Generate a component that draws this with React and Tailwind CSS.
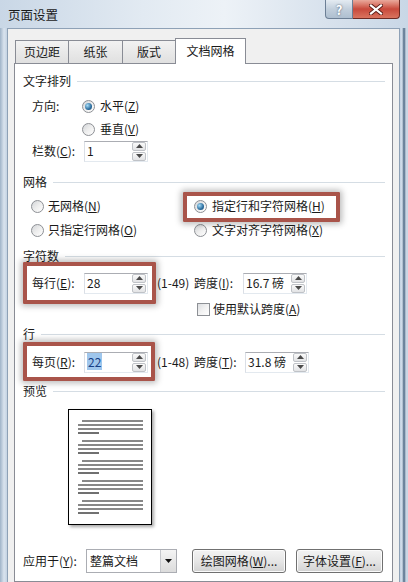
import React from 'react'

function Radio({ checked }) {
  return (
    <span className="w-[13px] h-[13px] shrink-0 rounded-full border border-[#8d9095] bg-gradient-to-br from-[#d3d5d8] via-[#eeeeee] to-white flex items-center justify-center">
      {checked && (
        <span className="w-[7px] h-[7px] rounded-full bg-[radial-gradient(circle_at_35%_35%,#a6dcf8,#2b6d9e_60%,#19466c)]" />
      )}
    </span>
  )
}

function Check() {
  return (
    <span className="w-[13px] h-[13px] shrink-0 border border-[#8d9095] bg-gradient-to-br from-[#dcdee1] via-[#f2f2f2] to-white" />
  )
}

function SpinBtn({ up }) {
  return (
    <div className="h-[9px] w-[14px] border border-[#bfc2c7] rounded-[2px] bg-gradient-to-b from-[#fafafa] to-[#e2e3e5] flex items-center justify-center">
      <svg width="7" height="4" viewBox="0 0 7 4">
        <path d={up ? 'M0 4 L3.5 0 L7 4Z' : 'M0 0 L3.5 4 L7 0Z'} fill="#4a4a4a" />
      </svg>
    </div>
  )
}

function Spin({ children }) {
  return (
    <div className="w-[64px] h-[21px] shrink-0 border border-[#abadb3] border-l-[#dbdfe6] border-r-[#e3e9ef] border-b-[#e3e9ef] bg-white flex items-center pl-[2px]">
      <span className="leading-none">{children}</span>
      <div className="ml-auto mr-[1px] flex flex-col gap-[1px]">
        <SpinBtn up />
        <SpinBtn />
      </div>
    </div>
  )
}

function Header({ title, className }) {
  return (
    <div className={'h-[22px] flex items-center pr-[7px] ' + (className || '')}>
      <span>{title}</span>
      <div className="flex-1 h-px bg-[#d5dde4] ml-[6px]" />
    </div>
  )
}

function RedBox({ className }) {
  return (
    <div
      className={
        'absolute border-[4px] border-[#a9544a] rounded-[1px] shadow-[0_0_6px_2px_rgba(0,0,0,0.28)] pointer-events-none ' +
        className
      }
    />
  )
}

function WinButton({ children, className }) {
  return (
    <div
      className={
        'h-[24px] shrink-0 rounded-[3px] border border-[#707070] bg-gradient-to-b from-[#f3f3f3] via-[#e6e6e6] to-[#d2d2d2] shadow-[inset_0_0_0_1px_#fbfbfb] flex items-center justify-center ' +
        className
      }
    >
      {children}
    </div>
  )
}

function Tab({ label, active, className }) {
  if (active) {
    return (
      <div className={'h-[26px] bg-white border border-b-0 border-[#898c95] flex items-center justify-center pb-[2px] ' + className}>
        {label}
      </div>
    )
  }
  return (
    <div
      className={
        'h-[23px] mb-[1px] border border-b-0 border-[#898c95] bg-gradient-to-b from-[#f2f2f2] to-[#e0e0e0] flex items-center justify-center ' +
        className
      }
    >
      {label}
    </div>
  )
}

export default function App() {
  return (
    <div className="w-[408px] h-[582px] overflow-hidden flex flex-col bg-[linear-gradient(90deg,#9fb3c8_0px,#d9e3ee_4px,#c4d3e3_7px,#c4d3e3_400px,#d2deea_402px,#4d6884_404px,#c9d6e4_406px)] font-['Noto_Sans_CJK_SC','Noto_Sans',sans-serif] text-[12px] text-[#1a1a1a]">
      {/* title bar */}
      <div className="h-[28px] shrink-0 flex items-start bg-[linear-gradient(90deg,#c9d7e6,#e2eaf2_35%,#edf2f7_55%,#d8e2ed_80%,#c9d7e6)]">
        <span className="ml-[8px] mt-[6px] text-[12.5px] leading-[18px]">页面设置</span>
        <div className="ml-auto mr-[8px] flex">
          <div className="w-[28px] h-[19px] rounded-bl-[4px] border border-t-0 border-[#6c7f95] bg-gradient-to-b from-[#e4ebf2] via-[#c2cfdc] to-[#aebfd0] flex items-center justify-center">
            <span className="text-white font-bold text-[13px] leading-none [text-shadow:0_0_2px_#3c4d60]">?</span>
          </div>
          <div className="w-[47px] h-[19px] rounded-br-[4px] border border-t-0 border-l-0 border-[#6d2a24] bg-gradient-to-b from-[#e9a99c] via-[#c8493c] to-[#d9735f] flex items-center justify-center">
            <svg width="14" height="11" viewBox="0 0 14 11">
              <path d="M2 1.5 L12 9.5 M12 1.5 L2 9.5" stroke="#5a1d17" strokeWidth="4" strokeLinecap="square" />
              <path d="M2 1.5 L12 9.5 M12 1.5 L2 9.5" stroke="#ffffff" strokeWidth="2.2" strokeLinecap="square" />
            </svg>
          </div>
        </div>
      </div>

      {/* dialog body */}
      <div className="flex-1 ml-[7px] mr-[8px] bg-[#f0f0f0] border-l border-r border-t border-[#8ea1b6] pl-[6px] pr-[6px] pt-[9px] flex flex-col min-h-0">
        {/* tabs */}
        <div className="h-[26px] flex items-end relative z-10 -mb-px shrink-0">
          <Tab label="页边距" className="w-[54px] ml-[1px]" />
          <Tab label="纸张" className="w-[55px] -ml-px" />
          <Tab label="版式" className="w-[54px] -ml-px" />
          <Tab label="文档网格" active className="w-[71px] -ml-px" />
        </div>

        {/* panel */}
        <div className="flex-1 bg-white border border-[#898c95] pl-[8px] pt-[6px] flex flex-col">
          <Header title="文字排列" />

          <div className="h-[22px] mt-[3px] flex items-center">
            <span className="ml-[9px] w-[50px]">方向:</span>
            <Radio checked />
            <span className="ml-[5px]">水平(<u>Z</u>)</span>
          </div>
          <div className="h-[22px] mt-[1px] flex items-center">
            <span className="ml-[59px]" />
            <Radio />
            <span className="ml-[5px]">垂直(<u>V</u>)</span>
          </div>
          <div className="h-[22px] flex items-center">
            <span className="ml-[9px] w-[52px]">栏数(<u>C</u>):</span>
            <Spin>1</Spin>
          </div>

          <Header title="网格" className="mt-[9px]" />
          <div className="h-[22px] mt-[2px] flex items-center">
            <div className="ml-[8px] w-[163px] flex items-center">
              <Radio />
              <span className="ml-[4px]">无网格(<u>N</u>)</span>
            </div>
            <div className="relative flex items-center">
              <Radio checked />
              <span className="ml-[5px]">指定行和字符网格(<u>H</u>)</span>
              <RedBox className="-left-[11px] -top-[5px] w-[157px] h-[30px]" />
            </div>
          </div>
          <div className="h-[22px] mt-[2px] flex items-center">
            <div className="ml-[8px] w-[163px] flex items-center">
              <Radio />
              <span className="ml-[4px]">只指定行网格(<u>O</u>)</span>
            </div>
            <div className="flex items-center">
              <Radio />
              <span className="ml-[5px]">文字对齐字符网格(<u>X</u>)</span>
            </div>
          </div>

          <Header title="字符数" className="mt-[4px]" />
          <div className="h-[22px] mt-[5px] flex items-center relative">
            <span className="ml-[9px] w-[52px]">每行(<u>E</u>):</span>
            <Spin>28</Spin>
            <span className="ml-[9px] w-[37px]">(1-49)</span>
            <span className="w-[49px]">跨度(<u>I</u>):</span>
            <Spin>16.7 磅</Spin>
            <RedBox className="left-0 -top-[10px] w-[133px] h-[42px]" />
          </div>
          <div className="h-[22px] mt-[4px] flex items-center">
            <span className="ml-[174px]" />
            <Check />
            <span className="ml-[3px]">使用默认跨度(<u>A</u>)</span>
          </div>

          <Header title="行" className="mt-[3px]" />
          <div className="h-[22px] mt-[6px] flex items-center relative">
            <span className="ml-[9px] w-[52px]">每页(<u>R</u>):</span>
            <Spin>
              <span className="bg-[#9fc6ec] text-[#173f86] px-[1px]">22</span>
            </Spin>
            <span className="ml-[9px] w-[37px]">(1-48)</span>
            <span className="w-[51px]">跨度(<u>T</u>):</span>
            <Spin>31.8 磅</Spin>
            <RedBox className="left-0 -top-[9px] w-[132px] h-[39px]" />
          </div>

          <Header title="预览" className="mt-[7px]" />
          <div className="ml-[45px] mt-[7px] w-[84px] h-[116px] border border-black bg-white shadow-[2px_2px_3px_rgba(0,0,0,0.35)]">
            <svg width="82" height="114" viewBox="0 0 82 114">
              {[11, 31, 51, 71, 91].map((y) => (
                <g key={y} stroke="#111" strokeWidth="1.2">
                  <line x1="13" y1={y} x2="74" y2={y} />
                  <line x1="9" y1={y + 4} x2="74" y2={y + 4} />
                  <line x1="9" y1={y + 8} x2="74" y2={y + 8} />
                  <line x1="9" y1={y + 12} x2="30" y2={y + 12} />
                </g>
              ))}
            </svg>
          </div>

          <div className="h-[24px] mt-[24px] flex items-center">
            <span className="w-[63px]">应用于(<u>Y</u>):</span>
            <div className="w-[91px] h-[24px] border border-[#abadb3] bg-white flex items-center pl-[3px]">
              <span>整篇文档</span>
              <div className="ml-auto w-[16px] h-full border-l border-[#c5c7cc] bg-gradient-to-b from-[#f4f4f4] to-[#dcdcdc] flex items-center justify-center">
                <svg width="7" height="4" viewBox="0 0 7 4">
                  <path d="M0 0 L3.5 4 L7 0Z" fill="#111" />
                </svg>
              </div>
            </div>
            <WinButton className="ml-[15px] w-[94px]">
              绘图网格(<u>W</u>)...
            </WinButton>
            <WinButton className="ml-[10px] w-[87px]">
              字体设置(<u>F</u>)...
            </WinButton>
          </div>
        </div>
      </div>
    </div>
  )
}
